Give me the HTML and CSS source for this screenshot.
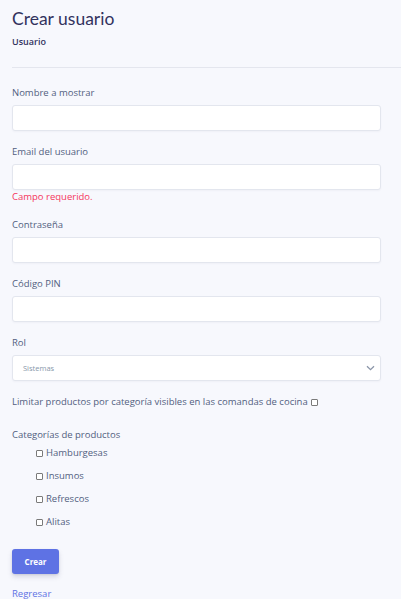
FILE: index.html
```html
<!DOCTYPE html>
<html lang="es">
<head>
<meta charset="utf-8">
<link rel="stylesheet" href="styles.css">
</head>
<body>
<div class="page">
  <header class="head">
    <h1 class="title">Crear usuario</h1>
    <div class="subtitle">Usuario</div>
  </header>
  <form class="form">
    <div class="group">
      <label class="label">Nombre a mostrar</label>
      <div class="input"></div>
    </div>
    <div class="group">
      <label class="label">Email del usuario</label>
      <div class="input"></div>
      <div class="error">Campo requerido.</div>
    </div>
    <div class="group">
      <label class="label">Contraseña</label>
      <div class="input"></div>
    </div>
    <div class="group">
      <label class="label">Código PIN</label>
      <div class="input"></div>
    </div>
    <div class="group">
      <label class="label">Rol</label>
      <div class="input select">
        <span>Sistemas</span>
        <svg class="chev" width="9" height="6" viewBox="0 0 9 6"><path d="M1 1.2 L4.5 4.6 L8 1.2" fill="none" stroke="#8a95a8" stroke-width="1.3"/></svg>
      </div>
    </div>
    <div class="limit">Limitar productos por categoría visibles en las comandas de cocina <span class="cb"></span></div>
    <div class="cats-title">Categorías de productos</div>
    <ul class="cats">
      <li><span class="cb"></span>Hamburgesas</li>
      <li><span class="cb"></span>Insumos</li>
      <li><span class="cb"></span>Refrescos</li>
      <li><span class="cb"></span>Alitas</li>
    </ul>
    <div class="btn">Crear</div>
    <a class="back" href="#">Regresar</a>
  </form>
</div>
</body>
</html>
```
FILE: styles.css
```css
html, body {
  margin: 0;
  padding: 0;
  background: #f7f8fd;
}
body {
  font-family: "Open Sans", "Noto Sans", sans-serif;
  color: #525f7f;
}
.page {
  padding-left: 12px;
}
.head {
  padding-top: 7px;
  height: 60px;
  border-bottom: 1px solid #e4e6ee;
}
.title {
  margin: 0;
  font-family: "Lato", "Open Sans", sans-serif;
  font-size: 17.5px;
  line-height: 24px;
  font-weight: 400;
  color: #32325d;
}
.subtitle {
  margin-top: 5px;
  font-size: 9px;
  line-height: 12px;
  font-weight: 600;
  color: #32325d;
}
.form {
  width: 369px;
  padding-top: 18px;
}
.group {
  margin-bottom: 14px;
}
.label {
  display: block;
  font-size: 9.5px;
  line-height: 14px;
  margin-bottom: 5px;
  color: #525f7f;
}
.input {
  height: 24px;
  background: #fff;
  border: 1px solid #e3e6ee;
  border-radius: 3px;
  box-shadow: 0 1px 2px rgba(50, 50, 93, 0.04);
}
.select {
  display: flex;
  align-items: center;
  justify-content: space-between;
  padding: 0 3px 0 10px;
  font-size: 7.5px;
  color: #8898aa;
}
.chev {
  margin-right: 2px;
}
.error {
  font-size: 9.5px;
  line-height: 14px;
  color: #f5365c;
}
.limit {
  font-size: 9.5px;
  line-height: 14px;
  display: flex;
  align-items: center;
  gap: 3px;
}
.cb {
  display: inline-block;
  width: 5px;
  height: 5px;
  border: 1px solid #7a7a7a;
  border-radius: 1px;
  background: #fff;
}
.cats-title {
  margin-top: 19px;
  font-size: 9.5px;
  line-height: 14px;
}
.cats {
  list-style: none;
  margin: 4px 0 0 0;
  padding: 0 0 0 24px;
  display: flex;
  flex-direction: column;
  gap: 9px;
}
.cats li {
  font-size: 9.5px;
  line-height: 14px;
  display: flex;
  align-items: center;
  gap: 3px;
}
.btn {
  margin-top: 20px;
  width: 47px;
  height: 25px;
  display: flex;
  align-items: center;
  justify-content: center;
  background: #5e72e4;
  color: #fff;
  font-size: 8px;
  font-weight: 700;
  border-radius: 3px;
  box-shadow: 0 3px 5px rgba(50, 50, 93, 0.15), 0 1px 2px rgba(0, 0, 0, 0.08);
}
.back {
  display: block;
  margin-top: 13px;
  font-size: 9.5px;
  line-height: 14px;
  color: #5e72e4;
  text-decoration: none;
}
```
